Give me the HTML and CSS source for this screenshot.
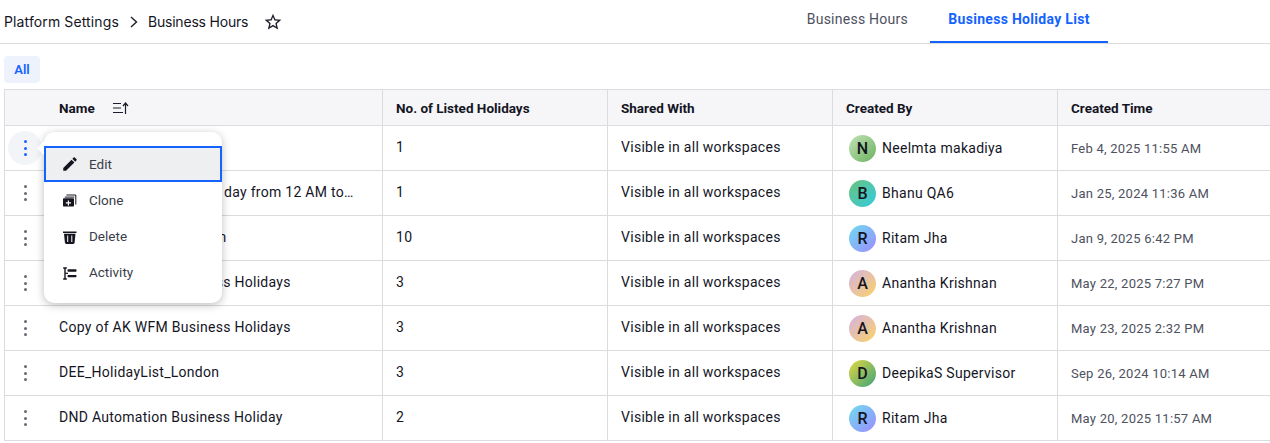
FILE: index.html
```html
<!DOCTYPE html>
<html lang="en">
<head>
    <meta charset="UTF-8">
    <title>Business Hours</title>
    <link rel="stylesheet" href="styles.css">
</head>
<body>
    <div class="page">
        <!-- Top bar -->
        <div class="top-bar">
            <div class="crumbs">
                <span class="crumb-root">Platform Settings</span>
                <svg class="crumb-sep" width="8" height="12" viewBox="0 0 8 12"><path d="M1 1l5.5 5L1 11" fill="none" stroke="#1b1d2a" stroke-width="1.4"/></svg>
                <span class="crumb-page">Business Hours</span>
                <svg class="star" width="20" height="20" viewBox="0 0 24 24"><path d="M22 9.24l-7.19-.62L12 2 9.19 8.63 2 9.24l5.46 4.73L5.82 21 12 17.27 18.18 21l-1.63-7.03L22 9.24zM12 15.4l-3.76 2.27 1-4.28-3.32-2.88 4.38-.38L12 6.1l1.71 4.04 4.38.38-3.32 2.88 1 4.28L12 15.4z" fill="#1b1d2a"/></svg>
            </div>
            <div class="tabs">
                <div class="tab">Business Hours</div>
                <div class="tab active">Business Holiday List</div>
            </div>
        </div>

        <!-- Filter -->
        <div class="filter-row">
            <div class="chip">All</div>
        </div>

        <!-- Table -->
        <table class="grid">
            <thead>
                <tr>
                    <th class="name-col">
                        <div class="name-head">
                            <span>Name</span>
                            <svg width="17" height="12" viewBox="0 0 17 12"><path d="M0 1.5h8M0 6h8M0 10.5h10" stroke="#1b1d2a" stroke-width="1.2" fill="none"/><path d="M12.5 12V1.5M10 4l2.5-3L15 4" stroke="#1b1d2a" stroke-width="1.2" fill="none"/></svg>
                        </div>
                    </th>
                    <th class="count-col">No. of Listed Holidays</th>
                    <th class="share-col">Shared With</th>
                    <th class="owner-col">Created By</th>
                    <th>Created Time</th>
                </tr>
            </thead>
            <tbody>
                <tr>
                    <td class="name-cell">
                        <button class="kebab open"><i></i><i></i><i></i></button>
                        <span class="name-text">24 Hours Holiday</span>
                    </td>
                    <td class="plain">1</td>
                    <td class="plain">Visible in all workspaces</td>
                    <td><div class="owner"><span class="avatar green">N</span>Neelmta makadiya</div></td>
                    <td class="time">Feb 4, 2025 11:55 AM</td>
                </tr>
                <tr>
                    <td class="name-cell">
                        <button class="kebab"><i></i><i></i><i></i></button>
                        <span class="name-text">Business Holiday List for day from 12 AM to 12 PM</span>
                    </td>
                    <td class="plain">1</td>
                    <td class="plain">Visible in all workspaces</td>
                    <td><div class="owner"><span class="avatar teal">B</span>Bhanu QA6</div></td>
                    <td class="time">Jan 25, 2024 11:36 AM</td>
                </tr>
                <tr>
                    <td class="name-cell">
                        <button class="kebab"><i></i><i></i><i></i></button>
                        <span class="name-text">Business Holidays Region</span>
                    </td>
                    <td class="plain">10</td>
                    <td class="plain">Visible in all workspaces</td>
                    <td><div class="owner"><span class="avatar blue">R</span>Ritam Jha</div></td>
                    <td class="time">Jan 9, 2025 6:42 PM</td>
                </tr>
                <tr>
                    <td class="name-cell">
                        <button class="kebab"><i></i><i></i><i></i></button>
                        <span class="name-text">Copy of AK WFM Business Holidays</span>
                    </td>
                    <td class="plain">3</td>
                    <td class="plain">Visible in all workspaces</td>
                    <td><div class="owner"><span class="avatar peach">A</span>Anantha Krishnan</div></td>
                    <td class="time">May 22, 2025 7:27 PM</td>
                </tr>
                <tr>
                    <td class="name-cell">
                        <button class="kebab"><i></i><i></i><i></i></button>
                        <span class="name-text">Copy of AK WFM Business Holidays</span>
                    </td>
                    <td class="plain">3</td>
                    <td class="plain">Visible in all workspaces</td>
                    <td><div class="owner"><span class="avatar peach">A</span>Anantha Krishnan</div></td>
                    <td class="time">May 23, 2025 2:32 PM</td>
                </tr>
                <tr>
                    <td class="name-cell">
                        <button class="kebab"><i></i><i></i><i></i></button>
                        <span class="name-text">DEE_HolidayList_London</span>
                    </td>
                    <td class="plain">3</td>
                    <td class="plain">Visible in all workspaces</td>
                    <td><div class="owner"><span class="avatar lime">D</span>DeepikaS Supervisor</div></td>
                    <td class="time">Sep 26, 2024 10:14 AM</td>
                </tr>
                <tr>
                    <td class="name-cell">
                        <button class="kebab"><i></i><i></i><i></i></button>
                        <span class="name-text">DND Automation Business Holiday</span>
                    </td>
                    <td class="plain">2</td>
                    <td class="plain">Visible in all workspaces</td>
                    <td><div class="owner"><span class="avatar blue">R</span>Ritam Jha</div></td>
                    <td class="time">May 20, 2025 11:57 AM</td>
                </tr>
            </tbody>
        </table>

        <!-- Row menu -->
        <div class="row-menu">
            <div class="menu-arrow"></div>
            <div class="menu-item focused">
                <svg width="18" height="18" viewBox="0 0 24 24"><path d="M3 17.25V21h3.75L17.81 9.94l-3.75-3.75L3 17.25zM20.71 7.04a1 1 0 0 0 0-1.41l-2.34-2.34a1 1 0 0 0-1.41 0l-1.83 1.83 3.75 3.75 1.83-1.83z" fill="#14151f"/></svg>
                Edit
            </div>
            <div class="menu-item">
                <svg width="18" height="18" viewBox="0 -1 18 18"><path d="M5.5 3h9.3v9.5" fill="none" stroke="#14151f" stroke-width="1"/><path d="M3.8 4.6h9.5v1H3.8z" fill="#14151f"/><path fill-rule="evenodd" d="M2.8 6.2h9.4a.8.8 0 0 1 .8.8v6.800a.8.8 0 0 1-.8.8H2.800a.8.8 0 0 1-.8-.8V7a.8.8 0 0 1 .8-.8zm4 2.200v1.900h-2v1.200h2v1.900H8v-1.900h2v-1.200H8V8.400z" fill="#14151f"/></svg>
                Clone
            </div>
            <div class="menu-item">
                <svg width="18" height="18" viewBox="0 -1.500 18 18"><path fill-rule="evenodd" d="M2 3h13.500v1.500H2zM3 5.200h11.500l-.9 8.900a1.500 1.500 0 0 1-1.500 1.400H5.400a1.500 1.500 0 0 1-1.500-1.400zM6.200 7v6.500h1V7zm4.100 0v6.500h1V7z" fill="#14151f"/></svg>
                Delete
            </div>
            <div class="menu-item">
                <svg width="18" height="18" viewBox="0 -1.500 18 18"><path d="M4 3v12M2.200 3.500h3.600M2.200 14.500h3.600" stroke="#14151f" stroke-width="1.400" fill="none"/><rect x="6.500" y="4.800" width="9" height="2.400" rx=".8" fill="#14151f"/><rect x="6.500" y="10.400" width="9" height="2.400" rx=".8" fill="#14151f"/><path d="M4 8.800h3" stroke="#14151f" stroke-width="1.200"/></svg>
                Activity
            </div>
        </div>
    </div>
</body>
</html>
```

FILE: styles.css
```css
* {
    box-sizing: border-box;
}

html, body {
    margin: 0;
    height: 100%;
    overflow: hidden;
    background-color: #fff;
}

body {
    font-family: Roboto, "Liberation Sans", sans-serif;
    font-size: 14px;
    color: #14151f;
}

.page {
    position: relative;
    width: 1270px;
    height: 443px;
    overflow: hidden;
}

/* top bar */
.top-bar {
    display: flex;
    justify-content: space-between;
    height: 44px;
    border-bottom: 1px solid #dcdcde;
    padding-left: 4px;
}

.crumbs {
    display: flex;
    align-items: center;
    height: 43px;
    font-family: Inter, Roboto, sans-serif;
    font-size: 14px;
    color: #14151f;
}

.crumb-root {
    letter-spacing: 0.12px;
}

.crumb-page {
    letter-spacing: -0.2px;
}

.crumb-sep {
    margin: 0 10px 0 11px;
}

.star {
    margin-left: 15px;
}

.tabs {
    display: flex;
    margin-right: 162px;
}

.tab {
    height: 43px;
    padding: 11px 22px 0;
    font-size: 14px;
    letter-spacing: 0.25px;
    color: #4e5160;
}

.tab.active {
    width: 178px;
    text-align: center;
    color: #1463ff;
    font-weight: 700;
    letter-spacing: 0.3px;
    border-bottom: 2px solid #1463ff;
    padding: 11px 0 0;
}

/* filter chip */
.filter-row {
    padding: 12px 4px 6px;
    height: 45px;
}

.chip {
    width: 36px;
    height: 27px;
    line-height: 27px;
    text-align: center;
    background-color: #eef2fd;
    border-radius: 4px;
    color: #1463ff;
    font-weight: 600;
    font-size: 13px;
}

/* table */
.grid {
    table-layout: fixed;
    border-collapse: collapse;
    width: 1300px;
    margin-left: 4px;
}

.grid th, .grid td {
    border: 1px solid #dcdcde;
    padding: 0 13px;
    text-align: left;
}

.grid th {
    height: 36px;
    padding-top: 1px;
    background-color: #f6f6f9;
    font-size: 13.5px;
    font-weight: 700;
}

.grid td {
    height: 45px;
    font-size: 14px;
    letter-spacing: 0.28px;
}

.grid td.plain {
    padding-bottom: 2px;
}

.name-col {
    width: 378px;
}

.count-col, .share-col, .owner-col {
    width: 225px;
}

.grid .name-col {
    padding-left: 54px;
}

.name-head {
    display: flex;
    align-items: center;
    gap: 18px;
}

.grid .name-cell {
    position: relative;
    padding: 0 28px 2px 54px;
}

.name-text {
    display: block;
    overflow: hidden;
    white-space: nowrap;
    text-overflow: ellipsis;
}

.kebab {
    position: absolute;
    left: 3px;
    top: 5px;
    width: 34px;
    height: 34px;
    border: none;
    border-radius: 50%;
    background: transparent;
    display: flex;
    flex-direction: column;
    align-items: center;
    justify-content: center;
    gap: 3.5px;
    padding: 0;
}

.kebab i {
    width: 3px;
    height: 3px;
    border-radius: 50%;
    background-color: #666874;
}

.kebab.open {
    background-color: #f3f4f8;
}

.kebab.open i {
    background-color: #1463ff;
}

.owner {
    display: flex;
    align-items: center;
    gap: 6px;
    padding-left: 3px;
}

.avatar {
    width: 27px;
    height: 27px;
    border-radius: 50%;
    display: flex;
    align-items: center;
    justify-content: center;
    font-size: 16px;
    font-weight: 500;
    letter-spacing: 0;
}

.avatar.green { background: linear-gradient(135deg, #c3e2b6, #6cb35f); }
.avatar.teal { background: linear-gradient(135deg, #69c27d, #35cbe0); }
.avatar.blue { background: linear-gradient(135deg, #6fdcef, #9c8cff); }
.avatar.peach { background: linear-gradient(135deg, #d4b2e4, #fbd267); }
.avatar.lime { background: linear-gradient(135deg, #e2d940, #3fa27c); }

.grid td.time {
    color: #4e5160;
    font-size: 13px;
    letter-spacing: 0.25px;
}

/* row menu */
.row-menu {
    position: absolute;
    left: 44px;
    top: 132px;
    width: 178px;
    height: 171px;
    padding-top: 14px;
    background-color: #fff;
    border-radius: 10px;
    box-shadow: 0 2px 8px rgba(20, 21, 31, 0.28);
}

.menu-arrow {
    position: absolute;
    left: -5px;
    top: 11px;
    width: 10px;
    height: 10px;
    background-color: #fff;
    transform: rotate(45deg);
}

.menu-item {
    position: relative;
    display: flex;
    align-items: center;
    gap: 10px;
    height: 36px;
    padding-left: 17px;
    font-size: 13.5px;
    color: #3b3d4a;
}

.menu-item.focused {
    background-color: #eeeff1;
    outline: 2px solid #1463ff;
    outline-offset: -2px;
}
```
